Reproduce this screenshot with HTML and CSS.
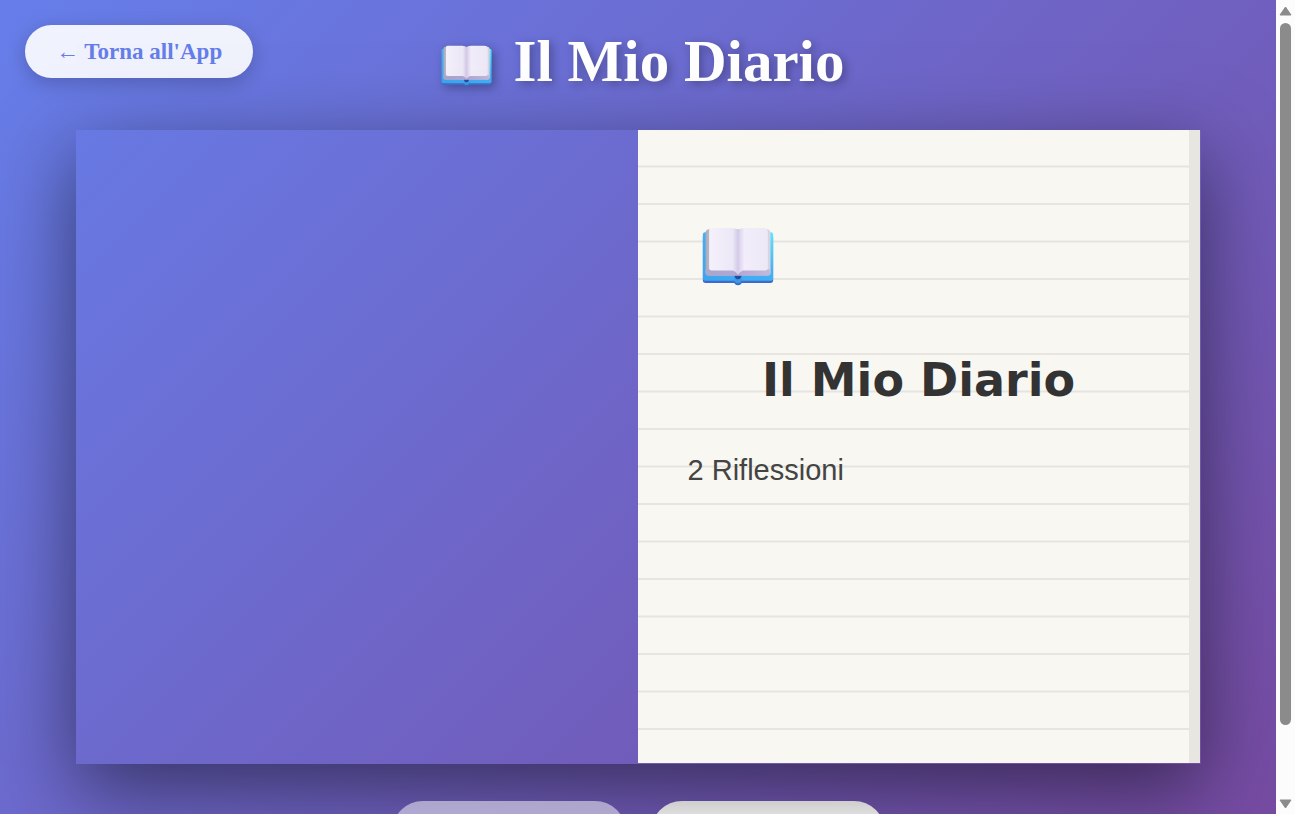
FILE: index.html
```html
<!DOCTYPE html>
<html lang="it">
<head>
<meta charset="utf-8">
<meta name="viewport" content="width=device-width, initial-scale=1">
<title>Il Mio Diario</title>
<link rel="stylesheet" href="styles.css">
</head>
<body>
<svg class="defs" aria-hidden="true">
  <defs>
    <linearGradient id="cover" x1="0" y1="1" x2="1" y2="0">
      <stop offset="0" stop-color="#3ca4ee"/>
      <stop offset="0.6" stop-color="#43b2f5"/>
      <stop offset="1" stop-color="#5fe6fc"/>
    </linearGradient>
    <linearGradient id="edge">
      <stop offset="0" stop-color="#a9a9bb"/>
      <stop offset="0.08" stop-color="#c2bfcd"/>
      <stop offset="0.9" stop-color="#cdc8dc"/>
      <stop offset="1" stop-color="#dcd8e4"/>
    </linearGradient>
    <linearGradient id="base">
      <stop offset="0" stop-color="#aca5cc"/>
      <stop offset="0.5" stop-color="#b4a6d6"/>
      <stop offset="1" stop-color="#c3b9da"/>
    </linearGradient>
    <linearGradient id="leaf">
      <stop offset="0" stop-color="#f4f1fb"/>
      <stop offset="0.4" stop-color="#ece8f7"/>
      <stop offset="0.49" stop-color="#d4cae8"/>
      <stop offset="0.54" stop-color="#e2dcf1"/>
      <stop offset="0.6" stop-color="#f1edfa"/>
      <stop offset="1" stop-color="#ece8f6"/>
    </linearGradient>
    <symbol id="book" viewBox="66 50 216 178">
      <rect x="68" y="74" width="212" height="145" rx="8" fill="#3c6bcb"/>
      <path d="M162 210h24v7q-3 9-12 9t-12-9z" fill="#356cc8"/>
      <rect x="68" y="66" width="212" height="146" rx="7" fill="url(#cover)"/>
      <path d="M162 205h24v6q-3 9-12 9t-12-9z" fill="#4196e9"/>
      <path d="M163 194h22q-1 14-11 14t-11-14z" fill="#234e96"/>
      <path d="M76 67q0-8 8-10h180q8 2 8 10v121q0 8-8 8H84q-8 0-8-8z" fill="url(#edge)"/>
      <path d="M76 178h196v10q0 8-8 8H84q-8 0-8-8z" fill="url(#base)"/>
      <path d="M87 60q0-7 7-7h62q14 0 18 9 4-9 18-9h58q12 0 14 10v110q0 8-8 8h-67q-9 2-15 13-6-11-15-13H94q-7 0-7-8z" fill="url(#leaf)"/>
    </symbol>
  </defs>
</svg>
<div class="window">
  <div class="app">
    <header class="header">
      <button class="back" type="button">← Torna all'App</button>
      <h1 class="title"><svg class="title-icon" aria-hidden="true"><use href="#book"/></svg>Il Mio Diario</h1>
    </header>
    <main>
      <section class="book">
        <div class="page page-left"></div>
        <article class="page page-right">
          <svg class="page-icon" aria-hidden="true"><use href="#book"/></svg>
          <h2 class="page-title">Il Mio Diario</h2>
          <p class="page-count">2 Riflessioni</p>
        </article>
      </section>
      <nav class="controls">
        <button class="turn" type="button" aria-label="Pagina precedente" disabled></button>
        <button class="turn" type="button" aria-label="Pagina successiva"></button>
      </nav>
    </main>
  </div>
  <div class="scrollbar" aria-hidden="true">
    <svg class="arrow" viewBox="0 0 13 10"><path d="M6.500 1 12 9H1z"/></svg>
    <div class="track"><div class="thumb"></div></div>
    <svg class="arrow" viewBox="0 0 13 10"><path d="M6.500 9 12 1H1z"/></svg>
  </div>
</div>
</body>
</html>
```
FILE: styles.css
```css
* {
  box-sizing: border-box;
}

body {
  margin: 0;
  font-family: Georgia, "Liberation Serif", serif;
}

.defs {
  position: absolute;
  width: 0;
  height: 0;
}

.window {
  display: flex;
  height: 100vh;
  overflow: hidden;
}

.app {
  flex: 1;
  min-width: 0;
  padding: 25px;
  overflow: hidden;
  background: linear-gradient(135deg, #667eea 0%, #764ba2 100%);
}

.header {
  display: grid;
  grid-template-columns: 1fr auto 1fr;
  align-items: start;
  height: 105px;
}

.back {
  justify-self: start;
  height: 53px;
  padding: 0 31px;
  border: 0;
  border-radius: 32px;
  background: rgba(255, 255, 255, 0.9);
  box-shadow: 0 5px 19px rgba(0, 0, 0, 0.2);
  color: #667eea;
  font-family: inherit;
  font-size: 23px;
  font-weight: bold;
  white-space: nowrap;
}

.title {
  display: flex;
  align-items: center;
  gap: 21px;
  margin: 0;
  padding-left: 10px;
  color: #fff;
  font-size: 59px;
  line-height: 72px;
  text-shadow: 3px 3px 10px rgba(0, 0, 0, 0.3);
}

.title-icon {
  width: 51px;
  height: 42px;
  margin-top: 10px;
  filter: drop-shadow(3px 3px 5px rgba(0, 0, 0, 0.3));
}

.book {
  position: relative;
  display: grid;
  grid-template-columns: 1fr 1fr;
  max-width: 1125px;
  min-height: calc(100vh - 180px);
  margin: 0 auto;
  padding: 0 1px 1px 0;
  box-shadow: 0 25px 75px rgba(0, 0, 0, 0.5);
}

.page-right {
  padding: 97px 39px 50px 50px;
  border-right: 11px solid #e8e6e0;
  background: repeating-linear-gradient(
    #f8f7f2 0 35px,
    #f0eeea 35px 36px,
    #e6e4df 36px 37px,
    #f0eeea 37px 38px,
    #f8f7f2 38px 73px,
    #e8e5e0 73px 75px
  );
}

.page-icon {
  display: block;
  width: 72px;
  height: 59px;
  margin-left: 14px;
}

.page-title {
  margin: 64px 0 0;
  color: #333;
  font-family: "Arial Black", "DejaVu Sans", sans-serif;
  font-size: 46px;
  font-weight: 900;
  line-height: 60px;
  text-align: center;
}

.page-count {
  margin: 40px 0 0;
  color: #444;
  font-family: "Liberation Sans", Arial, sans-serif;
  font-size: 29px;
  line-height: 40px;
}

.controls {
  display: flex;
  justify-content: center;
  gap: 25px;
  margin-top: 37px;
}

.turn {
  width: 234px;
  height: 62px;
  border: 0;
  border-radius: 31px;
  background: #fff;
}

.turn:disabled {
  opacity: 0.5;
}

.scrollbar {
  display: flex;
  flex-direction: column;
  align-items: center;
  gap: 7px;
  width: 19px;
  padding: 6px 0 5px;
  background: #fcfcfc;
}

.arrow {
  width: 13px;
  height: 10px;
  fill: #8b8b8b;
  stroke: #8b8b8b;
  stroke-linejoin: round;
}

.track {
  flex: 1;
  width: 11px;
}

.thumb {
  height: calc(100% - 67px);
  border-radius: 6px;
  background: #8b8b8b;
}
```
